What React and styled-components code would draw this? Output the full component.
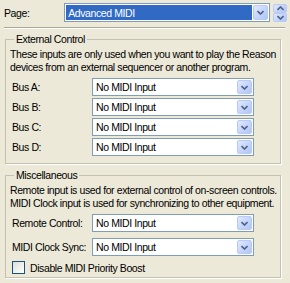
import React, { useState } from 'react';
import styled, { createGlobalStyle } from 'styled-components';

const GlobalStyle = createGlobalStyle`
  html, body {
    margin: 0;
    padding: 0;
    background: #ece9d8;
  }
  body {
    font-family: Tahoma, "Liberation Sans", Arial, sans-serif;
    font-size: 10.5px;
    letter-spacing: -0.4px;
    color: #000;
  }
`;

const buses = ['Bus A:', 'Bus B:', 'Bus C:', 'Bus D:'];

function Chevron({ up }) {
  return (
    <svg width="7" height="5" viewBox="0 0 7 5">
      <path
        d={up ? 'M0.5 4 L3.5 1 L6.5 4' : 'M0.5 1 L3.5 4 L6.5 1'}
        fill="none"
        stroke="#4d6185"
        strokeWidth="1.6"
      />
    </svg>
  );
}

function Combo({ value, selected, wide }) {
  return (
    <ComboBox wide={wide}>
      <ComboText selected={selected}>{value}</ComboText>
      <DropButton>
        <Chevron />
      </DropButton>
    </ComboBox>
  );
}

export default function App() {
  const [boost, setBoost] = useState(false);

  return (
    <>
      <GlobalStyle />
      <Panel>
        <PageRow>
          <PageLabel>Page:</PageLabel>
          <Combo value="Advanced MIDI" selected wide />
          <Spinner>
            <SpinHalf>
              <Chevron up />
            </SpinHalf>
            <SpinHalf>
              <Chevron />
            </SpinHalf>
          </Spinner>
        </PageRow>
        <Separator />

        <Group top={4} bottom={7}>
          <Legend>External Control</Legend>
          <Info>
            These inputs are only used when you want to play the Reason
            <br />
            devices from an external sequencer or another program.
          </Info>
          <Rows gap={2}>
            {buses.map((bus) => (
              <Row key={bus}>
                <RowLabel>{bus}</RowLabel>
                <Combo value="No MIDI Input" />
              </Row>
            ))}
          </Rows>
        </Group>

        <Group top={5} bottom={3}>
          <Legend>Miscellaneous</Legend>
          <Info>
            Remote input is used for external control of on-screen controls.
            <br />
            MIDI Clock input is used for synchronizing to other equipment.
          </Info>
          <Rows gap={6}>
            <Row>
              <RowLabel>Remote Control:</RowLabel>
              <Combo value="No MIDI Input" />
            </Row>
            <Row>
              <RowLabel>MIDI Clock Sync:</RowLabel>
              <Combo value="No MIDI Input" />
            </Row>
          </Rows>
          <CheckRow onClick={() => setBoost(!boost)}>
            <CheckBox>{boost ? '✓' : ''}</CheckBox>
            Disable MIDI Priority Boost
          </CheckRow>
        </Group>
      </Panel>
    </>
  );
}

const Panel = styled.div`
  width: 290px;
  height: 283px;
  box-sizing: border-box;
  padding: 3px 3px 0 4px;
  overflow: hidden;
`;

const PageRow = styled.div`
  display: flex;
  align-items: flex-start;
`;

const PageLabel = styled.div`
  width: 61px;
  padding-top: 4px;
`;

const ComboBox = styled.div`
  display: flex;
  align-items: center;
  width: ${(p) => (p.wide ? 206 : 162)}px;
  height: ${(p) => (p.wide ? 19 : 18)}px;
  box-sizing: border-box;
  border: 1px solid #7f9db9;
  background: #fff;
  padding: 1px;
  gap: 1px;
  flex: none;
`;

const ComboText = styled.div`
  flex: 1;
  height: 100%;
  display: flex;
  align-items: center;
  padding-left: 2px;
  background: ${(p) => (p.selected ? '#316ac5' : 'transparent')};
  color: ${(p) => (p.selected ? '#fff' : '#000')};
  white-space: nowrap;
  overflow: hidden;
`;

const DropButton = styled.div`
  width: 15px;
  height: 100%;
  box-sizing: border-box;
  display: flex;
  align-items: center;
  justify-content: center;
  border: 1px solid #bacbf3;
  border-radius: 2px;
  background: linear-gradient(135deg, #dfe8fd 0%, #c3d4fb 55%, #b1c6f7 100%);
`;

const Spinner = styled.div`
  margin-left: 3px;
  margin-top: 1px;
  width: 14px;
  height: 18px;
  display: flex;
  flex-direction: column;
`;

const SpinHalf = styled.div`
  flex: 1;
  display: flex;
  align-items: center;
  justify-content: center;
  border: 1px solid #bacbf3;
  border-radius: 2px;
  background: linear-gradient(135deg, #dfe8fd 0%, #c3d4fb 55%, #b1c6f7 100%);
`;

const Separator = styled.div`
  margin: 5px 2px 0 0;
  height: 1px;
  background: #aca899;
  border-bottom: 1px solid #fff;
`;

const Group = styled.fieldset`
  margin: ${(p) => p.top}px 6px 0 1px;
  padding: 0 0 ${(p) => p.bottom}px 6px;
  border: 1px solid #c4c1b2;
  border-radius: 0;
  box-shadow: 1px 1px 0 #fff;
  min-width: 0;
`;

const Legend = styled.legend`
  padding: 0 2px;
  margin-left: 2px;
`;

const Info = styled.p`
  margin: 3px 0 0 -2px;
  line-height: 13px;
  white-space: nowrap;
`;

const Rows = styled.div`
  display: flex;
  flex-direction: column;
  gap: ${(p) => p.gap}px;
  margin-top: 4px;
`;

const Row = styled.div`
  display: flex;
  align-items: center;
`;

const RowLabel = styled.div`
  width: 80px;
  flex: none;
`;

const CheckRow = styled.label`
  display: flex;
  align-items: center;
  gap: 5px;
  margin-top: 5px;
  cursor: default;
`;

const CheckBox = styled.span`
  width: 11px;
  height: 11px;
  border: 1px solid #1c5180;
  background: linear-gradient(135deg, #dcdcd7 0%, #f5f5f3 70%, #fff 100%);
  display: inline-flex;
  align-items: center;
  justify-content: center;
  font-size: 10px;
  color: #21a121;
`;
